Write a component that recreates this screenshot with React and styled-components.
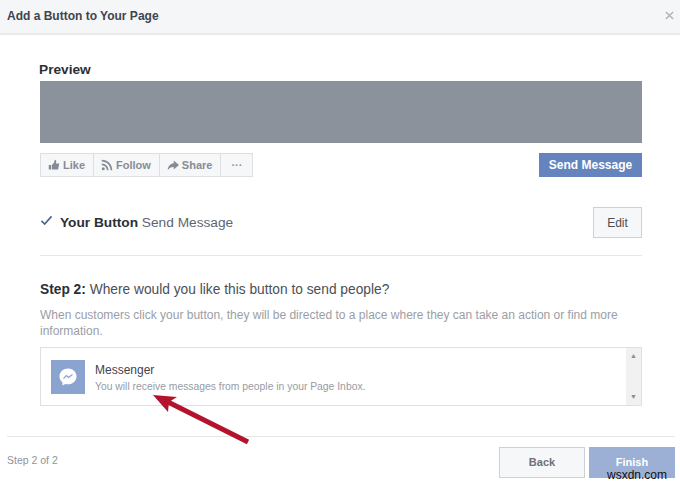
import styled, { createGlobalStyle } from 'styled-components';

const GlobalStyle = createGlobalStyle`
  html, body {
    margin: 0;
    padding: 0;
    background: #fff;
  }
  * {
    box-sizing: border-box;
  }
`;

const App = () => {
  return (
    <Page>
      <GlobalStyle />
      <Header>
        <Title>Add a Button to Your Page</Title>
        <CloseIcon viewBox="0 0 10 10">
          <path d="M1 1l8 8M9 1l-8 8" />
        </CloseIcon>
      </Header>

      <Content>
        <PreviewLabel>Preview</PreviewLabel>
        <Cover />
        <ActionRow>
          <ActionGroup>
            <ActionItem>
              <ActionIcon viewBox="0 0 16 16">
                <path d="M1 8h3v6H1zM5 8l3-3 1-4c2 0 2.500 2 1.500 5H15l-1.500 8H5z" />
              </ActionIcon>
              Like
            </ActionItem>
            <ActionItem>
              <ActionIcon viewBox="0 0 16 16">
                <circle cx="3" cy="13" r="2" />
                <path d="M1 6c5 0 9 4 9 9h-2.200c0-3.800-3-6.800-6.800-6.800zM1 1c8 0 14 6 14 14h-2.200C12.800 8.500 7.500 3.200 1 3.200z" />
              </ActionIcon>
              Follow
            </ActionItem>
            <ActionItem>
              <ActionIcon viewBox="0 0 16 16">
                <path d="M9 2l7 6-7 6v-3.500C5 10.500 2.500 12 1 15c0-5 3-9 8-9.500z" />
              </ActionIcon>
              Share
            </ActionItem>
            <ActionItem $last>···</ActionItem>
          </ActionGroup>
          <SendButton>Send Message</SendButton>
        </ActionRow>

        <ButtonRow>
          <CheckIcon viewBox="0 0 14 12">
            <path d="M1.500 6.500l3.500 3.500 7.500-8.500" />
          </CheckIcon>
          <ButtonLabel>
            <strong>Your Button</strong> Send Message
          </ButtonLabel>
          <EditButton>Edit</EditButton>
        </ButtonRow>

        <StepTitle>
          <strong>Step 2:</strong> Where would you like this button to send people?
        </StepTitle>
        <StepText>
          When customers click your button, they will be directed to a place where they can take an
          action or find more information.
        </StepText>

        <ListBox>
          <ListItem>
            <ItemIcon>
              <svg width="20" height="20" viewBox="0 0 20 20">
                <path
                  fill="#fff"
                  d="M10 1.500c-4.700 0-8.500 3.500-8.500 7.900 0 2.400 1.100 4.500 3 6v3.100l2.900-1.600c.8.200 1.700.4 2.600.4 4.700 0 8.500-3.500 8.500-7.900S14.700 1.500 10 1.500z"
                />
                <path fill="none" stroke="#8ba3cf" strokeWidth="1.200" d="M5.500 11.500l3-3 2 2 4-3" />
              </svg>
            </ItemIcon>
            <ItemText>
              <ItemName>Messenger</ItemName>
              <ItemDescription>You will receive messages from people in your Page Inbox.</ItemDescription>
            </ItemText>
          </ListItem>
          <Scrollbar>
            <ScrollArrow>▲</ScrollArrow>
            <ScrollArrow>▼</ScrollArrow>
          </Scrollbar>
        </ListBox>
      </Content>

      <Footer>
        <StepCount>Step 2 of 2</StepCount>
        <FooterButtons>
          <BackButton>Back</BackButton>
          <FinishButton>Finish</FinishButton>
        </FooterButtons>
      </Footer>

      <Arrow viewBox="0 0 110 60">
        <path d="M98 54L16 13" stroke="#b3142c" strokeWidth="5" fill="none" />
        <path d="M3 7l24 2-8 5-1 10z" fill="#b3142c" />
      </Arrow>
      <Watermark>wsxdn.com</Watermark>
    </Page>
  );
};

const Page = styled.div`
  position: relative;
  width: 680px;
  height: 485px;
  overflow: hidden;
  background: #fff;
  color: #1d2129;
  font-family: 'Liberation Sans', Arial, sans-serif;
`;

const Header = styled.div`
  display: flex;
  align-items: center;
  justify-content: space-between;
  height: 35px;
  padding: 0 7px 2px;
  background: #f5f6f7;
  border-bottom: 2px solid #e9eaec;
`;

const Title = styled.div`
  font-size: 12px;
  font-weight: bold;
  color: #3f4450;
`;

const CloseIcon = styled.svg`
  width: 9px;
  height: 9px;
  margin-right: -1px;
  fill: none;
  stroke: #aeb2b9;
  stroke-width: 1.6;
`;

const Content = styled.div`
  padding: 27px 38px 0 40px;
`;

const PreviewLabel = styled.div`
  height: 19px;
  margin-left: -1px;
  font-size: 13.700px;
  font-weight: bold;
  line-height: 16px;
  color: #2b2f36;
`;

const Cover = styled.div`
  height: 62px;
  background: #8c929c;
`;

const ActionRow = styled.div`
  display: flex;
  justify-content: space-between;
  margin-top: 10px;
`;

const ActionGroup = styled.div`
  display: flex;
  height: 24px;
  background: #f6f7f9;
  border: 1px solid #dddfe2;
`;

const ActionItem = styled.div`
  display: flex;
  align-items: center;
  gap: 3px;
  padding: 0 ${(props) => (props.$last ? '10px' : '8px 0 7px')};
  font-size: 11px;
  font-weight: bold;
  color: ${(props) => (props.$last ? '#8d949e' : '#868c96')};
  border-right: ${(props) => (props.$last ? 'none' : '1px solid #dddfe2')};
`;

const ActionIcon = styled.svg`
  width: 12px;
  height: 12px;
  fill: #858b95;
`;

const SendButton = styled.div`
  display: flex;
  align-items: center;
  justify-content: center;
  width: 103px;
  height: 24px;
  background: #6583bd;
  color: #fff;
  font-size: 12px;
  font-weight: bold;
`;

const ButtonRow = styled.div`
  display: flex;
  align-items: center;
  margin-top: 30px;
  padding-bottom: 17px;
  border-bottom: 1px solid #e5e6e9;
  box-sizing: content-box;
  height: 31px;
`;

const CheckIcon = styled.svg`
  width: 13px;
  height: 11px;
  margin-right: 7px;
  margin-top: -5px;
  fill: none;
  stroke: #4c6690;
  stroke-width: 1.800;
`;

const ButtonLabel = styled.div`
  flex: 1;
  font-size: 13.700px;
  color: #60656e;

  strong {
    color: #2b2f36;
  }
`;

const EditButton = styled.div`
  display: flex;
  align-items: center;
  justify-content: center;
  width: 49px;
  height: 31px;
  background: #f6f7f9;
  border: 1px solid #ced0d4;
  font-size: 12px;
  color: #4b4f56;
`;

const StepTitle = styled.div`
  margin-top: 25px;
  font-size: 13.760px;
  line-height: 17px;
  color: #4b4f56;

  strong {
    color: #2b2f36;
  }
`;

const StepText = styled.div`
  margin-top: 9px;
  font-size: 12px;
  line-height: 16px;
  color: #9a9ea6;
`;

const ListBox = styled.div`
  display: flex;
  justify-content: space-between;
  height: 59px;
  margin-top: 8px;
  border: 1px solid #dddfe2;
`;

const ListItem = styled.div`
  display: flex;
  align-items: center;
  gap: 10px;
  padding-left: 10px;
`;

const ItemIcon = styled.div`
  display: flex;
  align-items: center;
  justify-content: center;
  width: 34px;
  height: 34px;
  background: #8ba3cf;
`;

const ItemText = styled.div`
  display: flex;
  flex-direction: column;
  gap: 4px;
  margin-top: 2px;
`;

const ItemName = styled.div`
  font-size: 12px;
  line-height: 14px;
  color: #3f4450;
`;

const ItemDescription = styled.div`
  font-size: 10.350px;
  line-height: 12px;
  color: #979ba3;
`;

const Scrollbar = styled.div`
  display: flex;
  flex-direction: column;
  justify-content: space-between;
  align-items: center;
  width: 15px;
  padding: 4px 0;
  background: #f1f1f1;
`;

const ScrollArrow = styled.div`
  font-size: 7px;
  line-height: 8px;
  color: #8d8d8d;
`;

const Footer = styled.div`
  display: flex;
  align-items: center;
  justify-content: space-between;
  height: 31px;
  margin: 30px 5px 0 7px;
  padding-top: 10px;
  border-top: 1px solid #e5e6e9;
  box-sizing: content-box;
`;

const StepCount = styled.div`
  padding-bottom: 5px;
  font-size: 10.500px;
  color: #90949c;
`;

const FooterButtons = styled.div`
  display: flex;
  gap: 4px;
`;

const BackButton = styled.div`
  display: flex;
  align-items: center;
  justify-content: center;
  width: 86px;
  height: 31px;
  padding-bottom: 1px;
  background: #f6f7f9;
  border: 1px solid #ced0d4;
  font-size: 11px;
  font-weight: bold;
  color: #6d7178;
`;

const FinishButton = styled(BackButton)`
  background: #9cb0d6;
  border-color: #9cb0d6;
  color: #fff;
`;

const Arrow = styled.svg`
  position: absolute;
  left: 150px;
  top: 388px;
  width: 110px;
  height: 60px;
`;

const Watermark = styled.div`
  position: absolute;
  left: 607px;
  top: 469px;
  font-size: 12px;
  line-height: 13px;
  color: #111;
`;

export default App;
